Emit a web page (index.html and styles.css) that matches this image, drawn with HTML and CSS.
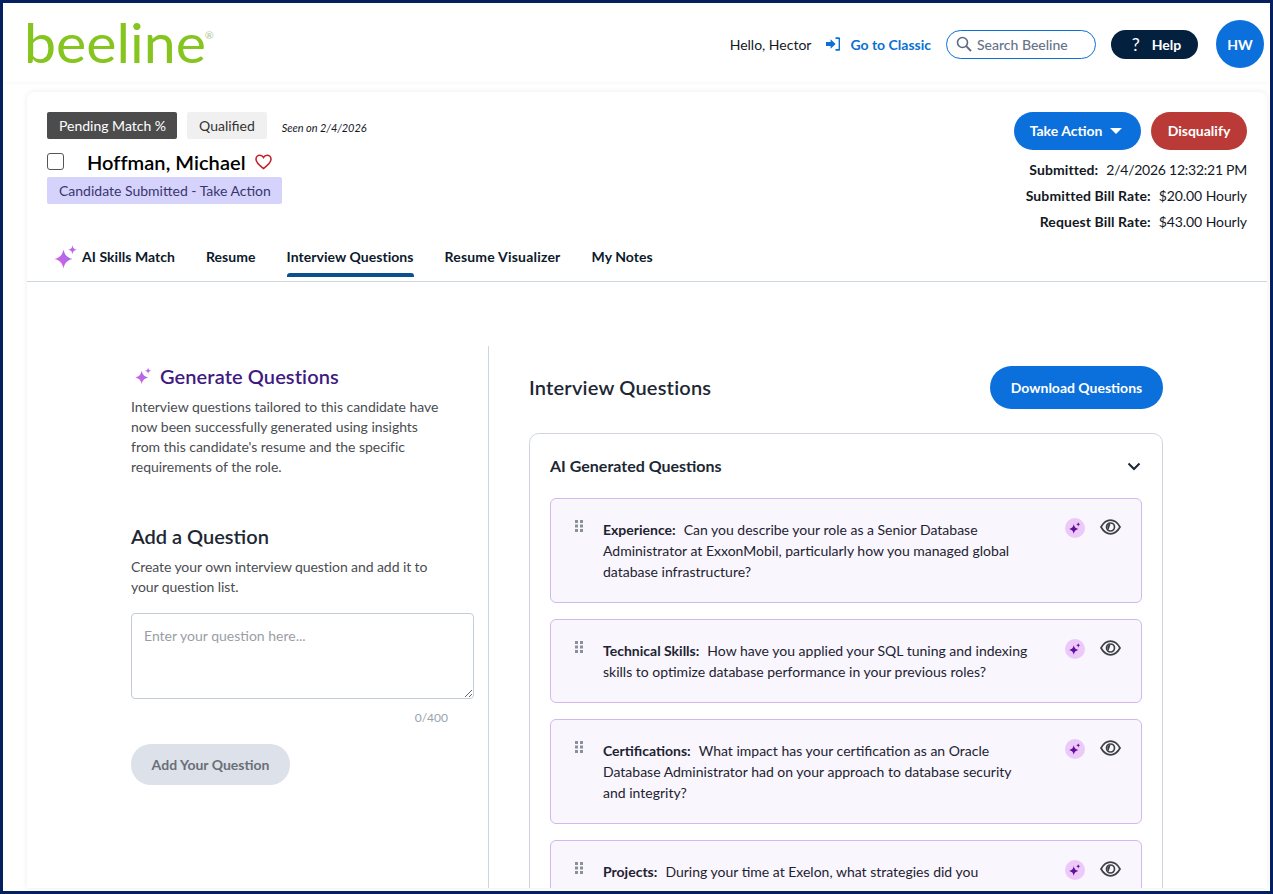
FILE: index.html
```html
<!DOCTYPE html>
<html lang="en">
<head>
<meta charset="utf-8">
<title>Beeline</title>
<link rel="stylesheet" href="styles.css">
</head>
<body>
<svg class="defs" width="0" height="0" aria-hidden="true">
  <defs>
    <linearGradient id="spark" x1="0" y1="1" x2="1" y2="0">
      <stop offset="0" stop-color="#ea5fdc"/>
      <stop offset="1" stop-color="#8f6cf4"/>
    </linearGradient>
    <symbol id="i-spark" viewBox="0 0 24 24">
      <path d="M9.500 4.500C10.600 10 13 12.600 18.500 14 13 15.400 10.600 18 9.500 23.500 8.400 18 6 15.400.5 14 6 12.600 8.400 10 9.500 4.500z"/>
      <path d="M18.500 0c.4 3 1.300 4.100 4.500 4.700-3.200.6-4.100 1.700-4.500 4.800-.4-3.100-1.300-4.200-4.500-4.800 3.200-.6 4.100-1.700 4.500-4.700z"/>
    </symbol>
    <symbol id="i-grip" viewBox="0 0 8 12">
      <g fill="#8a909a"><rect width="3" height="3"/><rect x="5" width="3" height="3"/><rect y="4.500" width="3" height="3"/><rect x="5" y="4.500" width="3" height="3"/><rect y="9" width="3" height="3"/><rect x="5" y="9" width="3" height="3"/></g>
    </symbol>
    <symbol id="i-eye" viewBox="0 0 21 16">
      <path d="M1 8c2.500-4.400 5.700-6.800 9.500-6.800S17.500 3.600 20 8c-2.500 4.400-5.700 6.800-9.500 6.800S3.500 12.400 1 8z" fill="none" stroke="#3d4045" stroke-width="1.700"/>
      <circle cx="10.500" cy="8" r="4" fill="none" stroke="#3d4045" stroke-width="1.700"/>
      <path d="M10.500 4.800A3.200 3.200 0 0 0 7.300 8a3.200 3.200 0 0 0 1.400 2.600z" fill="#3d4045"/>
    </symbol>
  </defs>
</svg>
<div class="frame">
  <header class="topbar">
    <div class="logo">beeline<sup class="reg">®</sup></div>
    <div class="top-actions">
      <span class="hello">Hello, Hector</span>
      <a class="classic">
        <svg width="14" height="14" viewBox="0 0 14 14"><path d="M0 5h4.600V2.200L9.600 7l-5 4.800V9H0z" fill="#0b6fd4"/><path d="M9.500 1.200h3a1 1 0 0 1 1 1v9.600a1 1 0 0 1-1 1h-3" fill="none" stroke="#0b6fd4" stroke-width="1.800"/></svg>
        <span>Go to Classic</span>
      </a>
      <div class="search">
        <svg width="16" height="16" viewBox="0 0 16 16"><circle cx="6.500" cy="6.500" r="5" fill="none" stroke="#5d6b80" stroke-width="1.600"/><path d="M10.200 10.200L15 15" stroke="#5d6b80" stroke-width="1.900"/></svg>
        <span>Search Beeline</span>
      </div>
      <button class="help"><span class="q">?</span>Help</button>
      <div class="avatar">HW</div>
    </div>
  </header>

  <main class="card">
    <section class="summary">
      <div class="who">
        <div class="badges">
          <span class="badge dark">Pending Match %</span>
          <span class="badge light">Qualified</span>
          <em class="seen">Seen on 2/4/2026</em>
        </div>
        <div class="name-row">
          <span class="check"></span>
          <h1>Hoffman, Michael</h1>
          <svg width="17" height="16" viewBox="0 0 17 16"><path d="M8.500 14.600C3.500 10.800 1 8.400 1 5.300 1 2.900 2.800 1.200 4.900 1.200c1.500 0 2.800.8 3.600 2.200.8-1.400 2.100-2.200 3.600-2.200C14.200 1.200 16 2.900 16 5.300c0 3.100-2.500 5.500-7.500 9.300z" fill="none" stroke="#c5222b" stroke-width="1.600"/></svg>
        </div>
        <span class="status">Candidate Submitted - Take Action</span>
      </div>
      <div class="meta">
        <div class="meta-btns">
          <button class="pill blue action">Take Action<i class="caret"></i></button>
          <button class="pill red">Disqualify</button>
        </div>
        <div class="meta-row"><b>Submitted:</b><span class="stamp">2/4/2026 12:32:21 PM</span></div>
        <div class="meta-row"><b>Submitted Bill Rate:</b><span>$20.00 Hourly</span></div>
        <div class="meta-row"><b>Request Bill Rate:</b><span>$43.00 Hourly</span></div>
      </div>
    </section>

    <nav class="tabs">
      <a class="tab ai">
        <svg class="spark" width="24" height="24"><use href="#i-spark"/></svg>
        <span>AI Skills Match</span>
      </a>
      <a class="tab">Resume</a>
      <a class="tab active">Interview Questions</a>
      <a class="tab wide">Resume Visualizer</a>
      <a class="tab">My Notes</a>
    </nav>

    <section class="content">
      <aside class="side">
        <div class="gen-title">
          <svg class="spark" width="17" height="18"><use href="#i-spark"/></svg>
          <h2>Generate Questions</h2>
        </div>
        <p class="desc gen-desc">Interview questions tailored to this candidate have now been successfully generated using insights from this candidate's resume and the specific requirements of the role.</p>
        <h2 class="add-title">Add a Question</h2>
        <p class="desc add-desc">Create your own interview question and add it to your question list.</p>
        <textarea class="ask" placeholder="Enter your question here..."></textarea>
        <div class="count">0/400</div>
        <button class="pill add" disabled>Add Your Question</button>
      </aside>

      <div class="questions">
        <div class="q-head">
          <h2>Interview Questions</h2>
          <button class="pill blue download">Download Questions</button>
        </div>
        <div class="panel">
          <div class="panel-head">
            <h3>AI Generated Questions</h3>
            <svg width="14" height="9" viewBox="0 0 14 9"><path d="M1.500 1.500L7 7l5.500-5.500" fill="none" stroke="#1d2733" stroke-width="2"/></svg>
          </div>
          <article class="q-card">
            <svg class="grip" width="8" height="12"><use href="#i-grip"/></svg>
            <p><b>Experience:</b>Can you describe your role as a Senior Database Administrator at ExxonMobil, particularly how you managed global database infrastructure?</p>
            <div class="q-icons">
              <span class="ai-dot"><svg width="12" height="12"><use href="#i-spark"/></svg></span>
              <svg class="eye" width="21" height="16"><use href="#i-eye"/></svg>
            </div>
          </article>
          <article class="q-card">
            <svg class="grip" width="8" height="12"><use href="#i-grip"/></svg>
            <p><b>Technical Skills:</b>How have you applied your SQL tuning and indexing skills to optimize database performance in your previous roles?</p>
            <div class="q-icons">
              <span class="ai-dot"><svg width="12" height="12"><use href="#i-spark"/></svg></span>
              <svg class="eye" width="21" height="16"><use href="#i-eye"/></svg>
            </div>
          </article>
          <article class="q-card">
            <svg class="grip" width="8" height="12"><use href="#i-grip"/></svg>
            <p><b>Certifications:</b>What impact has your certification as an Oracle Database Administrator had on your approach to database security and integrity?</p>
            <div class="q-icons">
              <span class="ai-dot"><svg width="12" height="12"><use href="#i-spark"/></svg></span>
              <svg class="eye" width="21" height="16"><use href="#i-eye"/></svg>
            </div>
          </article>
          <article class="q-card">
            <svg class="grip" width="8" height="12"><use href="#i-grip"/></svg>
            <p><b>Projects:</b>During your time at Exelon, what strategies did you</p>
            <div class="q-icons">
              <span class="ai-dot"><svg width="12" height="12"><use href="#i-spark"/></svg></span>
              <svg class="eye" width="21" height="16"><use href="#i-eye"/></svg>
            </div>
          </article>
        </div>
      </div>
    </section>
  </main>
</div>
</body>
</html>
```
FILE: styles.css
```css
* { box-sizing: border-box; }
html, body { margin: 0; height: 100%; overflow: hidden; }
body { font-family: Lato, "Open Sans", sans-serif; font-size: 14px; color: #14181f; background: #fff; }
h1, h2, h3, p { margin: 0; }
button { font-family: inherit; border: 0; cursor: pointer; }
.defs { position: absolute; }
.spark { fill: url(#spark); }

.frame { height: 894px; border: 3px solid #04205f; background: #fff; overflow: hidden; }

.topbar { height: 79px; display: flex; justify-content: space-between; padding: 0 6px 0 21px; box-shadow: 0 1px 3px rgba(0,0,0,.03); }
.logo { font-size: 53.5px; font-weight: 400; color: #86c51f; line-height: 78px; height: 79px; transform: scaleX(1.07); transform-origin: left center; }
.reg { font-size: 10px; color: #a9c98a; vertical-align: 24px; line-height: 0; margin-left: -1px; }
.top-actions { display: flex; align-items: center; height: 82px; }
.hello { margin-right: 15px; }
.classic { display: flex; align-items: center; gap: 10px; color: #0b6fd4; font-weight: 700; margin-right: 15px; }
.search { width: 150px; height: 29px; border: 1px solid #0b6fd4; border-radius: 15px; display: flex; align-items: center; gap: 5px; padding-left: 9px; color: #66738a; font-weight: 500; margin-right: 15px; }
.help { width: 87px; height: 29px; border-radius: 15px; background: #04203f; color: #fff; font-size: 14px; font-weight: 700; display: flex; align-items: center; justify-content: center; gap: 12px; margin-right: 18px; padding-left: 10px; }
.help .q { font-size: 18px; font-weight: 400; }
.avatar { width: 48px; height: 48px; border-radius: 50%; background: #0b6fdc; color: #fff; font-weight: 700; display: flex; align-items: center; justify-content: center; }

.card { margin: 10px 3px 0 24px; height: 796px; overflow: hidden; background: #fff; border-radius: 8px 8px 0 0; box-shadow: 0 0 6px rgba(0,0,0,.08); }

.summary { display: flex; justify-content: space-between; padding: 20px 20px 0; height: 146px; }
.badges { display: flex; align-items: center; height: 27px; }
.badge { height: 27px; display: flex; align-items: center; padding: 0 12px; border-radius: 2px; margin-right: 10px; }
.badge.dark { background: #4c4c4c; color: #fff; padding-right: 11px; }
.badge.light { background: #f0f0f0; color: #333; }
.seen { font-size: 11px; letter-spacing: -.05px; margin-left: 5px; margin-top: 3px; color: #14181f; }
.name-row { display: flex; align-items: center; height: 24px; margin-top: 11px; }
.check { width: 17px; height: 17px; border: 1px solid #555; border-radius: 3px; margin-right: 23px; margin-top: -1px; }
.name-row h1 { font-size: 20px; font-weight: 600; color: #000; margin-right: 9px; padding-bottom: 1px; letter-spacing: .05px; }
.status { display: inline-flex; align-items: center; height: 27px; padding: 0 12px; width: 235px; white-space: nowrap; background: #d5d3fb; color: #3a3570; border-radius: 2px; margin-top: 3px; }

.meta { text-align: right; }
.meta-btns { display: flex; justify-content: flex-end; gap: 10px; margin-bottom: 6px; }
.pill { height: 38px; border-radius: 20px; font-size: 14px; font-weight: 700; color: #fff; padding: 0 16px; }
.pill.blue { background: #0b6fdc; }
.pill.red { background: #b93a36; width: 96px; padding: 0 0 2px; }
.action { width: 127px; padding: 0 3px 2px 0; }
.caret { display: inline-block; border: 6px solid transparent; border-top: 6px solid #fff; border-bottom: 0; margin-left: 8px; vertical-align: 2px; }
.meta-row { height: 26px; display: flex; justify-content: flex-end; align-items: center; gap: 8px; }
.meta-row b { font-weight: 700; letter-spacing: .1px; }
.meta-row span { letter-spacing: -.08px; }
.meta-row .stamp { letter-spacing: -.25px; }

.tabs { display: flex; gap: 31px; height: 44px; padding-left: 27px; border-bottom: 1px solid #cdd5df; }
.tab { position: relative; font-weight: 700; letter-spacing: .05px; color: #0c1a2b; height: 39px; line-height: 38px; display: block; }
.tab.wide { letter-spacing: .2px; }
.tab.ai { display: flex; gap: 4px; }
.tab.ai svg { margin-top: 7px; }
.tab.active::after { content: ""; position: absolute; left: 0; right: 0; bottom: 0; height: 4px; background: #0a4f8f; border-radius: 3px 3px 0 0; }

.content { display: flex; margin-top: 64px; margin-left: 104px; }
.side { width: 358px; padding-right: 15px; border-right: 1px solid #cdd5df; height: 600px; padding-top: 19px; }
.gen-title { display: flex; align-items: center; gap: 8px; padding-left: 4px; height: 22px; }
.gen-title h2 { font-size: 20px; font-weight: 600; letter-spacing: .1px; color: #3f1a80; }
.desc { line-height: 20px; color: #4a4d52; max-width: 315px; letter-spacing: -.03px; }
.gen-desc { margin-top: 10px; }
.add-title { font-size: 20px; font-weight: 600; color: #1d2733; margin-top: 47px; }
.add-desc { margin-top: 9px; letter-spacing: -.08px; }
.ask { display: block; width: 343px; height: 86px; margin-top: 16px; padding: 13px 12px; border: 1px solid #c3ccd8; border-radius: 4px; font-family: inherit; font-size: 14px; resize: vertical; background: #fff; }
.ask::placeholder { color: #9a9ea6; }
.count { font-size: 12px; color: #9aa3ae; text-align: right; padding-right: 25px; margin-top: 11px; }
.pill.add { margin-top: 19px; height: 41px; width: 159px; padding: 0; background: #dde1e9; color: #6a6f78; }

.questions { width: 634px; margin-left: 40px; padding-top: 20px; }
.q-head { display: flex; justify-content: space-between; align-items: center; height: 43px; }
.q-head h2 { font-size: 20px; font-weight: 600; letter-spacing: .2px; color: #1d2733; padding-bottom: 2px; }
.download { height: 43px; width: 173px; padding: 0; border-radius: 22px; }
.panel { margin-top: 24px; padding: 0 20px; border: 1px solid #cfd5df; border-radius: 10px; }
.panel-head { height: 64px; display: flex; align-items: center; justify-content: space-between; padding-right: 1px; }
.panel-head h3 { font-size: 16px; font-weight: 700; color: #1d2733; padding-bottom: 2px; }
.q-card { display: flex; align-items: flex-start; margin-bottom: 16px; padding: 20px 20px 20px 24px; background: #f9f6fe; border: 1px solid #d2b8ee; border-radius: 6px; }
.grip { margin-top: 1px; flex: none; }
.q-card p { width: 425px; margin-left: 20px; line-height: 21px; color: #1d2330; }
.q-card b { font-weight: 700; margin-right: 8px; }
.q-icons { display: flex; align-items: center; gap: 15px; margin-left: auto; margin-top: -1px; }
.eye { margin-top: -2px; }
.ai-dot { width: 20px; height: 20px; border-radius: 50%; background: #ecc9f8; fill: #5f0f9c; display: flex; align-items: center; justify-content: center; }
```
